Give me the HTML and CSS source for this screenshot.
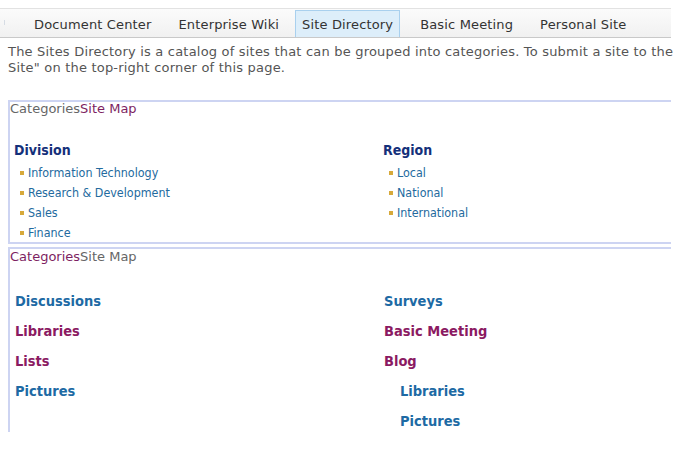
FILE: index.html
```html
<!DOCTYPE html>
<html lang="en">
<head>
    <meta charset="UTF-8">
    <meta name="viewport" content="width=device-width, initial-scale=1.0">
    <title>Site Directory</title>
    <link rel="stylesheet" href="styles.css">
</head>
<body>

    <div class="topnav">
        <span class="nav-edge"></span>
        <a class="nav-item">Document Center</a>
        <a class="nav-item">Enterprise Wiki</a>
        <a class="nav-item selected">Site Directory</a>
        <a class="nav-item">Basic Meeting</a>
        <a class="nav-item">Personal Site</a>
    </div>

    <p class="intro">The Sites Directory is a catalog of sites that can be grouped into categories. To submit a site to the<br>Site" on the top-right corner of this page.</p>

    <div class="panel panel-categories">
        <div class="panel-tabs"><span class="tab-off">Categories</span><span class="tab-on">Site Map</span></div>
        <div class="columns">
            <div class="column">
                <h3 class="group-title">Division</h3>
                <ul class="group-list">
                    <li>Information Technology</li>
                    <li>Research &amp; Development</li>
                    <li>Sales</li>
                    <li>Finance</li>
                </ul>
            </div>
            <div class="column">
                <h3 class="group-title">Region</h3>
                <ul class="group-list">
                    <li>Local</li>
                    <li>National</li>
                    <li>International</li>
                </ul>
            </div>
        </div>
    </div>

    <div class="panel panel-sitemap">
        <div class="panel-tabs"><span class="tab-on">Categories</span><span class="tab-off">Site Map</span></div>
        <div class="columns">
            <div class="column">
                <a class="map-link">Discussions</a>
                <a class="map-link visited">Libraries</a>
                <a class="map-link visited">Lists</a>
                <a class="map-link">Pictures</a>
            </div>
            <div class="column">
                <a class="map-link">Surveys</a>
                <a class="map-link visited">Basic Meeting</a>
                <a class="map-link visited">Blog</a>
                <a class="map-link sub">Libraries</a>
                <a class="map-link sub">Pictures</a>
            </div>
        </div>
    </div>

</body>
</html>
```

FILE: styles.css
```css
body {
    margin: 0;
    padding: 0;
    background-color: #fff;
    font-family: "DejaVu Sans", Verdana, sans-serif;
    overflow: hidden;
}
.topnav {
    display: flex;
    align-items: stretch;
    margin: 8px 5px 0 0;
    height: 28px;
    border-top: 1px solid #e2e2e2;
    border-bottom: 1px solid #c9c9c9;
    background: linear-gradient(#fbfbfb, #f1f1f1);
    padding-left: 21px;
    gap: 1px;
}
.nav-edge {
    position: absolute;
    left: 4px;
    top: 20px;
    width: 1px;
    height: 5px;
    background: #d6dce4;
}
.nav-item {
    display: flex;
    align-items: center;
    padding: 0 12px;
    font-size: 13px;
    letter-spacing: 0.15px;
    color: #333;
    border: 1px solid transparent;
    border-bottom: none;
    margin-top: 1px;
}
.nav-item.selected {
    background: #ddeefa;
    border-color: #a9d0ee;
    padding: 0 6px;
    margin: 1px 6px 0 2px;
}
.intro {
    margin: 6px 0 0 0;
    padding: 0 8px;
    font-size: 13px;
    letter-spacing: 0.2px;
    line-height: 16px;
    color: #555;
    white-space: nowrap;
    height: 32px;
}
.panel {
    margin: 0 5px 0 8px;
    border-top: 2px solid #cdd4f2;
    border-left: 2px solid #cdd4f2;
}
.panel-categories {
    margin-top: 24px;
    border-bottom: 2px solid #cdd4f2;
    height: 140px;
}
.panel-sitemap {
    margin-top: 3px;
    height: 183px;
}
.panel-tabs {
    font-size: 13px;
    line-height: 12px;
    padding-top: 1px;
}
.panel-sitemap .panel-tabs {
    padding-top: 2px;
}
.tab-off {
    color: #666;
}
.tab-on {
    color: #7e1f62;
}
.columns {
    display: grid;
    grid-template-columns: 369px 1fr;
    padding-left: 4px;
    font-family: Tahoma, "DejaVu Sans Condensed", sans-serif;
}
.panel-categories .columns {
    margin-top: 27px;
}
.group-title {
    margin: 0 0 4px 0;
    font-size: 14px;
    line-height: 17px;
    color: #14307a;
}
.group-list {
    list-style: none;
    margin: 0;
    padding: 0 0 0 6px;
}
.group-list li {
    font-size: 12.4px;
    line-height: 20px;
    color: #236a9e;
    display: flex;
    align-items: center;
}
.group-list li::before {
    content: "";
    width: 4px;
    height: 4px;
    background: #d7a93a;
    margin-right: 4px;
}
.panel-sitemap .columns {
    margin-top: 23px;
    padding-left: 5px;
}
.map-link {
    display: block;
    font-size: 14.5px;
    font-weight: bold;
    line-height: 30px;
    color: #1d6aa4;
}
.map-link.visited {
    color: #8b1a62;
}
.map-link.sub {
    padding-left: 16px;
}
```
